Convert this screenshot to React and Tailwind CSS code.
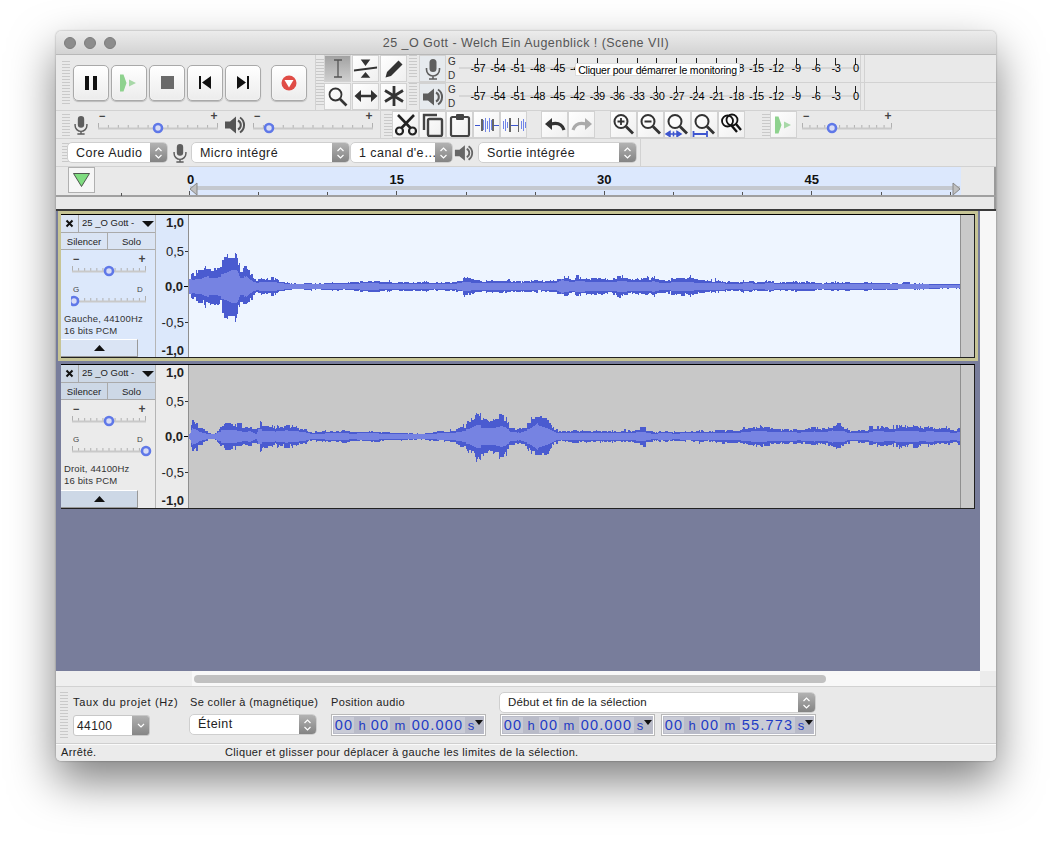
import React from "react";

const sans = "font-['Liberation_Sans',Arial,sans-serif]";

function mulberry(seed) {
  let a = seed;
  return () => {
    a |= 0; a = (a + 0x6d2b79f5) | 0;
    let t = Math.imul(a ^ (a >>> 15), 1 | a);
    t = (t + Math.imul(t ^ (t >>> 7), 61 | t)) ^ t;
    return ((t ^ (t >>> 14)) >>> 0) / 4294967296;
  };
}
const ENV1 = [[189,18],[195,15],[203,16],[210,20],[218,22],[225,24],[232,31],[237,29],[240,14],[243,15],[246,25],[250,14],[255,9],[265,7],[272,9],[280,5],[295,3.5],[310,3.5],[330,4],[350,5.5],[380,5.5],[400,5.5],[420,4.5],[440,5],[460,6],[463,10],[480,8],[500,6.5],[520,5.5],[535,6],[556,7],[561,13],[570,10],[590,9],[600,9],[610,10],[650,10],[670,8],[690,9],[700,8],[750,5],[800,5],[820,4],[860,4.5],[900,3],[935,2.2],[960,1]];
const ENV2 = [[189,3],[192,17],[198,12],[205,6],[210,3],[214,3],[218,9],[222,14],[240,12],[250,10],[256,3],[258,13],[275,12],[295,11],[305,10],[310,5],[340,5.5],[380,5],[400,4],[420,3.5],[430,4.5],[455,6.5],[462,10],[470,15],[476,21],[490,19],[505,20],[510,10],[520,7],[530,15],[537,26],[545,20],[552,12],[558,6],[600,6],[630,6],[640,9],[645,9],[652,5],[700,6],[740,8],[760,11],[780,7],[800,7],[830,12],[850,8],[900,11],[930,10],[960,9]];
function envAt(env, x) {
  for (let i = 1; i < env.length; i++) {
    if (x <= env[i][0]) {
      const [x0, y0] = env[i - 1];
      const [x1, y1] = env[i];
      return y0 + ((y1 - y0) * (x - x0)) / (x1 - x0);
    }
  }
  return 1;
}
function wavePaths(env, seed, cy) {
  const r = mulberry(seed);
  let peak = "", rms = "";
  let up = 1, dn = 1, lump = 1, lumpLeft = 0;
  for (let x = 189; x < 960; x++) {
    if (lumpLeft-- <= 0) {
      lump = 0.72 + 0.33 * r();
      lumpLeft = 5 + Math.floor(r() * 10);
    }
    const base = envAt(env, x);
    const e = (base > 12 ? base * 1.18 : base) * lump;
    if (r() < 0.6) {
      const p = Math.max(1.5, e * (0.72 + 0.3 * r()));
      up = Math.round(p * (r() < 0.08 ? 1.25 : 1));
      dn = Math.round(p * (0.85 + 0.25 * r()));
    }
    const m = Math.max(1, Math.round(e * 0.42 + 0.5));
    const px = x - 189 + 0.5;
    peak += `M${px} ${cy - up}V${cy + dn + 1}`;
    rms += `M${px} ${cy - m}V${cy + m + 1}`;
  }
  return { peak, rms };
}
function Wave({ env, seed, cy, h }) {
  const { peak, rms } = wavePaths(env, seed, cy);
  return (
    <svg width="771" height={h} className="block shrink-0" shapeRendering="crispEdges">
      <path d={peak} stroke="#4a5bd0" strokeWidth="1" fill="none" />
      <path d={rms} stroke="#7683e2" strokeWidth="1" fill="none" />
    </svg>
  );
}

function Grip({ h = "h-[44px]" }) {
  return <div className={`w-[8px] shrink-0 ${h} bg-[repeating-linear-gradient(#c9c9c9_0_1px,transparent_1px_3px)]`} />;
}

function TBtn({ children }) {
  return (
    <div className="w-[36px] h-[36px] shrink-0 rounded-[5px] border border-[#a9a9a9] flex items-center justify-center bg-gradient-to-b from-[#ffffff] to-[#ececec] shadow-[inset_0_0_2px_#fff,0_1px_1px_rgba(0,0,0,.2)]">
      {children}
    </div>
  );
}
function Sq({ children, active, tint }) {
  const bg = active ? "bg-gradient-to-b from-[#a2a2a2] to-[#cfcfcf]" : tint ? "bg-[#e6eaee]" : "bg-gradient-to-br from-[#ffffff] to-[#efefef]";
  return (
    <div className={`w-[27px] h-[27px] shrink-0 flex items-center justify-center border border-[#d2d2d2] ${bg}`}>
      {children}
    </div>
  );
}

const Mic = ({ c = "#5e5e5e", s = 22 }) => (
  <svg width={s} height={s} viewBox="0 0 22 22">
    <rect x="7.5" y="1" width="7" height="13" rx="3.5" fill={c} />
    <path d="M4.5 10v1.5a6.5 6.5 0 0 0 13 0V10M11 18v3M7 21h8" stroke={c} strokeWidth="1.6" fill="none" />
  </svg>
);
const Speaker = ({ c = "#5e5e5e", s = 22 }) => (
  <svg width={s} height={s} viewBox="0 0 22 22">
    <path d="M1 7.5h5L12 2.5v17l-6-5H1z" fill={c} />
    <path d="M14 6.5a5 5 0 0 1 0 9M16 3.5a9 9 0 0 1 0 15" stroke={c} strokeWidth="2" fill="none" />
  </svg>
);
const PlayIcon = () => (
  <svg width="20" height="20" viewBox="0 0 20 20">
    <path d="M1 1.500h3.500L7.500 10l-3 8.500H1z" fill="#8ed28e" />
    <path d="M10 6.500l7 3.500-7 3.500z" fill="#a8d8a8" />
  </svg>
);
const Zoom = ({ mark, under }) => (
  <svg width="25" height="25" viewBox="0 0 25 25">
    <circle cx="10" cy="9.500" r="6.500" stroke="#333" strokeWidth="2" fill="#fff" fillOpacity=".4" />
    <path d="M15 14.500l7 7" stroke="#333" strokeWidth="2.800" />
    {mark === "+" && <path d="M6.500 9.500h7M10 6v7" stroke="#333" strokeWidth="1.800" />}
    {mark === "-" && <path d="M6.500 9.500h7" stroke="#333" strokeWidth="1.800" />}
    {under === "fit" && <path d="M1 22h15M5 19.500l-4 2.500 4 2.500zM12 19.500l4 2.500-4 2.500zM8.500 19.500v5" stroke="#3d55cf" strokeWidth="1.500" fill="#3d55cf" />}
    {under === "proj" && <path d="M1.500 19v6M15 19v6M1.500 22h13.500" stroke="#3d55cf" strokeWidth="1.800" fill="none" />}
  </svg>
);
const ZoomToggle = () => (
  <svg width="25" height="25" viewBox="0 0 25 25">
    <circle cx="8.500" cy="9" r="5.500" stroke="#111" strokeWidth="1.800" fill="none" />
    <circle cx="13" cy="8" r="5.500" stroke="#111" strokeWidth="1.800" fill="none" />
    <path d="M12 13l6 7M17 12l5 6" stroke="#111" strokeWidth="2.400" />
  </svg>
);
const Trim = () => (
  <svg width="24" height="18" viewBox="0 0 24 18" shapeRendering="crispEdges">
    <path d="M0 9h5M19 9h5" stroke="#3d55cf" strokeWidth="1" />
    <path d="M8 4v10M10 2v14M12 5v8M14 2v14M16 4v10" stroke="#6f84e8" strokeWidth="1" />
    <path d="M6 3h1.500v12H6zM17 3h1.500v12H17z" fill="#666" />
  </svg>
);
const Silence = () => (
  <svg width="24" height="18" viewBox="0 0 24 18" shapeRendering="crispEdges">
    <path d="M1 5v8M3 3v12M5 6v6M19 5v8M21 3v12M23 6v6" stroke="#6f84e8" strokeWidth="1" />
    <path d="M7 9h10" stroke="#3d55cf" strokeWidth="1" />
    <path d="M7 2h1.500v14H7zM15.500 2H17v14h-1.500z" fill="#666" />
  </svg>
);

function Slider({ w, at, labels = ["−", "+"] }) {
  const ticks = [];
  for (let i = 0; i <= 12; i++) ticks.push((i / 12) * (w - 3) + 1);
  const pan = labels[0] === "G";
  return (
    <svg width={w + 6} height="26" className="block shrink-0">
      <text x="2" y={pan ? 9.5 : 11} fontSize={pan ? 8 : 11} fontFamily="Liberation Sans" fill="#444" fontWeight={pan ? "normal" : "bold"}>{labels[0]}</text>
      <text x={pan ? w - 10 : w - 8.5} y={pan ? 9.5 : 11} fontSize={pan ? 8 : 12} fontFamily="Liberation Sans" fill="#444" fontWeight={pan ? "normal" : "bold"}>{labels[1]}</text>
      {ticks.map((t, i) => <rect key={i} x={t} y={i === 0 || i === 12 ? 14 : 16} width="1" height={i === 0 || i === 12 ? 5 : 3} fill="#b0b0b0" />)}
      <rect x="1" y="18.500" width={w - 2} height="2" fill="#c9c9c9" />
      <circle cx={at} cy="19" r="4" fill="#d8dcf5" stroke="#5f78e8" strokeWidth="2.600" />
    </svg>
  );
}

function Select({ label, cls, small, tight }) {
  const txt = small
    ? "text-[11.500px] leading-[18px] tracking-[.12px]"
    : tight
      ? "text-[12.500px] leading-[18px] tracking-[.45px]"
      : "text-[12.500px] leading-[20px] tracking-[.45px]";
  return (
    <div className={`${cls} flex items-stretch rounded-[5px] bg-white border border-[#cfcfcf] overflow-hidden shrink-0`}>
      <div className={`flex-1 whitespace-nowrap overflow-hidden text-[#222] pl-[8px] ${txt}`}>{label}</div>
      <div className="w-[17px] bg-gradient-to-b from-[#b2b2b2] to-[#848484] flex items-center justify-center">
        <svg width="9" height="14" viewBox="0 0 9 14"><path d="M1.500 5l3-3 3 3M1.500 9l3 3 3-3" stroke="#fff" strokeWidth="1.200" fill="none" /></svg>
      </div>
    </div>
  );
}

const LEVELS = ["-57","-54","-51","-48","-45","-42","-39","-36","-33","-30","-27","-24","-21","-18","-15","-12","-9","-6","-3","0"];
const HIDDEN = ["-39","-36","-33","-30","-27","-24","-21"];
function MeterRow({ icon, tip, bordered }) {
  return (
    <div className={`flex relative ${bordered ? "h-[28px] border-b border-[#d2d2d2]" : "h-[27px]"}`}>
      <div className="w-px shrink-0" />
      <Grip h="h-[24px]" />
      <div className="w-[2px] shrink-0" />
      <Sq tint>{icon}</Sq>
      <div className="w-[13px] shrink-0 flex flex-col pl-[2px] text-[10px] leading-[14px] text-[#333]"><span>G</span><span>D</span></div>
      <div className="w-[401px] shrink-0 flex pl-[9px] bg-[linear-gradient(transparent_12px,#d6d6d6_12px,#d6d6d6_14px,transparent_14px)]">
        {LEVELS.map((l) => (
          <div key={l} className="w-[19.900px] shrink-0 flex flex-col items-center">
            <div className="w-px h-[7px] mt-[3px] bg-[#222]" />
            {!(tip && HIDDEN.includes(l)) && (
              <span className="-mt-[3px] text-[11px] leading-[12px] text-black tracking-[-.3px] whitespace-nowrap">{l}</span>
            )}
          </div>
        ))}
      </div>
      <div className="w-px h-full bg-[#d2d2d2] shrink-0" />
      <div className="w-[3px] shrink-0" />
      <div className="w-px h-full bg-[#d2d2d2] shrink-0" />
      {tip && (
        <div className="absolute left-[167px] top-[8px] h-[13px] w-[165px] bg-white border border-[#ddd] text-[10.500px] leading-[12px] text-center text-black whitespace-nowrap tracking-[-.2px]">
          Cliquer pour démarrer le monitoring
        </div>
      )}
    </div>
  );
}

function TrackPanel({ info, bg, btn, pan }) {
  return (
    <div className={`w-[95px] shrink-0 ${bg} flex flex-col border-r border-[#b5b5b5]`}>
      <div className="flex h-[18px]">
        <div className={`w-[18px] ${btn} flex items-center justify-center border-r border-b border-[#aaa]`}>
          <svg width="9" height="9" viewBox="0 0 9 9"><path d="M1.500 1.500l6 6M7.500 1.500l-6 6" stroke="#111" strokeWidth="2" /></svg>
        </div>
        <div className={`flex-1 ${btn} flex items-center justify-between pl-[3px] pr-[1px] border-b border-[#aaa] text-[9.500px] text-[#222] whitespace-nowrap`}>
          <span>25 _O Gott -</span>
          <svg width="12" height="6" viewBox="0 0 12 6"><path d="M0 0h12L6 6z" fill="#111" /></svg>
        </div>
      </div>
      <div className="flex h-[17px] border-b border-[#aaa]">
        <div className={`w-[47px] ${btn} border-r border-[#aaa] text-center text-[9.500px] leading-[17px] text-[#222]`}>Silencer</div>
        <div className={`flex-1 ${btn} text-center text-[9.500px] leading-[17px] text-[#222]`}>Solo</div>
      </div>
      <div className="pl-[10px] mt-[2px]"><Slider w={76} at={38} /></div>
      <div className="pl-[10px] mt-[4px]"><Slider w={76} at={pan} labels={["G", "D"]} /></div>
      <div className="pl-[3px] mt-[5px] text-[9.500px] leading-[11.500px] text-[#333] whitespace-nowrap">
        <div className="tracking-[.15px]">{info}</div>
        <div className="tracking-[.15px]">16 bits PCM</div>
      </div>
      <div className="flex-1" />
      <div className={`w-[77px] h-[18px] ${btn} flex items-center justify-center border-t border-white border-r border-r-[#999] border-b border-b-[#999]`}>
        <svg width="11" height="6" viewBox="0 0 11 6"><path d="M0 6h11L5.500 0z" fill="#111" /></svg>
      </div>
    </div>
  );
}

function VRuler({ bg }) {
  const rows = [["1,0", true, "h-[14px]"], ["0,5", false, "h-[29px]"], ["0,0", true, "h-[35px]"], ["-0,5", false, "h-[36px]"], ["-1,0", true, "h-[28px]"]];
  return (
    <div className={`w-[33px] shrink-0 ${bg} border-r border-[#8f8f8f] flex flex-col items-end overflow-hidden`}>
      {rows.map(([t, b, h], i) => (
        <div key={t} className={`${h} shrink-0 flex items-end text-[13px] leading-[13px] text-[#222] ${b ? "font-bold" : ""}`}>
          <span>{t}</span>
          {i > 0 && i < 4 ? <span className={`ml-[1px] mb-[6px] h-px ${i === 2 ? "w-[4px] bg-black" : "w-[3px] bg-[#333]"}`} /> : <span className="w-[4px]" />}
        </div>
      ))}
    </div>
  );
}

function Timecode({ v, w = "w-[155px]" }) {
  const D = ({ t, cls }) => <span className={`bg-[#c9cbd6] tracking-[1.200px] text-[14.500px] text-center ${cls}`}>{t}</span>;
  const U = ({ t, cls }) => <span className={`text-[13px] text-center ${cls}`}>{t}</span>;
  return (
    <div className={`${w} h-[22px] shrink-0 border border-[#b8b8b8] outline outline-1 -outline-offset-2 outline-white bg-[#b9bbc8] flex items-stretch py-[2px] pl-[2px] text-[#1f3cc4] leading-[17px] whitespace-nowrap relative`}>
      <D t="00" cls="w-[20px]" /><U t="h" cls="w-[16px]" /><D t="00" cls="w-[20px]" /><U t="m" cls="w-[20px]" /><D t={v} cls="w-[55px]" /><U t="s" cls="w-[12px]" />
      <svg width="8" height="5" viewBox="0 0 8 5" className="absolute right-[2px] top-[5px]"><path d="M0 0h8L4 5z" fill="#111" /></svg>
    </div>
  );
}

function Label({ children, cls }) {
  return <div className={`text-[11px] leading-[13px] text-[#222] whitespace-nowrap ${cls || ""}`}>{children}</div>;
}

export default function App() {
  return (
    <div className={`w-[1052px] h-[841px] bg-white pl-[56px] pt-[31px] overflow-hidden ${sans}`}>
      <div className="w-[940px] h-[730px] rounded-[5px] overflow-hidden flex flex-col bg-[#e9e9e9] shadow-[0_20px_45px_rgba(0,0,0,.5),0_0_2px_rgba(0,0,0,.4)]">
        {/* title bar */}
        <div className="h-[24px] shrink-0 flex items-center bg-gradient-to-b from-[#ececec] to-[#d3d3d3] border-b border-[#b8b8b8]">
          <div className="flex gap-[8px] pl-[8px]">
            <span className="w-[12px] h-[12px] rounded-full bg-[#8c8c8c] border border-[#7d7d7d]" />
            <span className="w-[12px] h-[12px] rounded-full bg-[#8c8c8c] border border-[#7d7d7d]" />
            <span className="w-[12px] h-[12px] rounded-full bg-[#8c8c8c] border border-[#7d7d7d]" />
          </div>
          <div className="flex-1 text-center pt-[1px] pr-[60px] text-[12.500px] text-[#555] tracking-[.45px] whitespace-nowrap">25 _O Gott - Welch Ein Augenblick ! (Scene VII)</div>
        </div>

        {/* row 1 */}
        <div className="h-[56px] shrink-0 flex border-b border-[#d2d2d2]">
          <div className="w-[260px] shrink-0 flex items-center border-r border-[#d2d2d2] pl-[6px]">
            <Grip />
            <div className="w-[3px]" />
            <div className="flex gap-[2px]">
              <TBtn><svg width="14" height="14" viewBox="0 0 14 14"><path d="M1 0h4v14H1zM9 0h4v14H9z" fill="#111" /></svg></TBtn>
              <TBtn><PlayIcon /></TBtn>
              <TBtn><svg width="13" height="13"><rect width="13" height="13" fill="#6a6a6a" /></svg></TBtn>
              <TBtn><svg width="14" height="13" viewBox="0 0 14 13"><path d="M1 0h2v13H1zM13 0v13L4 6.500z" fill="#111" /></svg></TBtn>
              <TBtn><svg width="14" height="13" viewBox="0 0 14 13"><path d="M11 0h2v13h-2zM1 0v13L10 6.500z" fill="#111" /></svg></TBtn>
              <div className="w-[6px]" />
              <TBtn><svg width="16" height="16" viewBox="0 0 16 16"><circle cx="8" cy="8" r="7.500" fill="#e04c46" /><path d="M3.500 5h9L8 12.500z" fill="#fff" /></svg></TBtn>
            </div>
          </div>
          <div className="w-[8px] shrink-0 pt-[4px]"><Grip h="h-[48px]" /></div>
          <div className="w-[84px] shrink-0 grid grid-cols-3 grid-rows-2">
            <Sq active><svg width="12" height="19" viewBox="0 0 12 19"><path d="M2 1h8M2 18h8M6 1v17" stroke="#555" strokeWidth="1.300" /></svg></Sq>
            <Sq><svg width="26" height="24" viewBox="0 0 26 24"><path d="M1 12.500L25 9.500v2L1 14.500z" fill="#333" /><path d="M8 2h10l-5 7zM8 21h10l-5-6z" fill="#333" /></svg></Sq>
            <Sq><svg width="20" height="20" viewBox="0 0 20 20"><path d="M14.500 1.500l4 4L7 17l-5.500 1.500L3 13z" fill="#333" /></svg></Sq>
            <Sq><svg width="21" height="21" viewBox="0 0 21 21"><circle cx="8.500" cy="8.500" r="6" stroke="#333" strokeWidth="1.800" fill="none" /><path d="M13 13l6.500 6.500" stroke="#333" strokeWidth="2.600" /></svg></Sq>
            <Sq><svg width="24" height="14" viewBox="0 0 24 14"><path d="M5 7h14" stroke="#333" strokeWidth="2.400" /><path d="M7 1L0.500 7 7 13zM17 1l6.500 6L17 13z" fill="#333" /></svg></Sq>
            <Sq><svg width="22" height="22" viewBox="0 0 22 22"><path d="M11 1v20M2 5.500l18 11M20 5.500l-18 11" stroke="#333" strokeWidth="2.800" /></svg></Sq>
          </div>
          <div className="flex-1 flex flex-col">
            <MeterRow icon={<Mic />} tip bordered />
            <MeterRow icon={<Speaker />} />
          </div>
        </div>

        {/* row 2 */}
        <div className="h-[28px] shrink-0 flex items-center border-b border-[#d2d2d2]">
          <div className="w-[6px]" /><Grip h="h-[22px]" />
          <div className="w-px" />
          <Mic s={20} />
          <div className="w-[6px]" />
          <div className="-mt-[5px]"><Slider w={122} at={61} /></div>
          <div className="-ml-px"><Speaker c="#555" s={22} /></div>
          <div className="w-[6px]" />
          <div className="-mt-[5px]"><Slider w={122} at={17} /></div>
          <div className="w-px h-full bg-[#d2d2d2]" /><div className="w-[3px]" /><Grip h="h-[22px]" />
          <div className="flex">
            <Sq><svg width="24" height="24" viewBox="0 0 24 24"><circle cx="5.500" cy="18" r="3.500" stroke="#222" strokeWidth="2.200" fill="none" /><circle cx="18.500" cy="18" r="3.500" stroke="#222" strokeWidth="2.200" fill="none" /><path d="M7.500 15L20 2M16.500 15L4 2" stroke="#222" strokeWidth="2.600" /></svg></Sq>
            <Sq><svg width="24" height="24" viewBox="0 0 24 24"><path d="M3 17V2h13" stroke="#444" strokeWidth="2.400" fill="none" /><rect x="7" y="6" width="14" height="17" rx="1.500" stroke="#444" strokeWidth="2.400" fill="none" /></svg></Sq>
            <Sq><svg width="22" height="24" viewBox="0 0 22 24"><rect x="2" y="4" width="18" height="19" rx="1.500" stroke="#444" strokeWidth="2.200" fill="none" /><rect x="7" y="1" width="8" height="6" rx="1" fill="#444" /></svg></Sq>
            <Sq><Trim /></Sq>
            <Sq><Silence /></Sq>
          </div>
          <div className="w-[14px]" />
          <div className="flex">
            <Sq><svg width="22" height="16" viewBox="0 0 22 16"><path d="M8 1L1 7l7 6z" fill="#333" /><path d="M7 7c6-1.500 11 0 13 6" stroke="#333" strokeWidth="3.200" fill="none" /></svg></Sq>
            <Sq><svg width="22" height="16" viewBox="0 0 22 16"><path d="M14 1l7 6-7 6z" fill="#aaa" /><path d="M15 7C9 5.500 4 7 2 13" stroke="#aaa" strokeWidth="3.200" fill="none" /></svg></Sq>
          </div>
          <div className="w-[15px]" />
          <div className="flex">
            <Sq><Zoom mark="+" /></Sq>
            <Sq><Zoom mark="-" /></Sq>
            <Sq><Zoom under="fit" /></Sq>
            <Sq><Zoom under="proj" /></Sq>
            <Sq><ZoomToggle /></Sq>
          </div>
          <div className="w-[17px]" /><Grip h="h-[22px]" />
          <Sq><PlayIcon /></Sq>
          <div className="w-[4px]" />
          <div className="-mt-[5px]"><Slider w={92} at={31} /></div>
        </div>

        {/* row 3 */}
        <div className="h-[28px] shrink-0 flex items-center border-b border-[#d2d2d2]">
          <div className="w-[6px]" /><Grip h="h-[20px]" />
          <div className="-ml-[3px]"><Select label="Core Audio" cls="w-[101px] h-[21px]" /></div>
          <div className="w-[2px]" />
          <Mic s={20} />
          <div className="w-px" />
          <Select label="Micro intégré" cls="w-[159px] h-[21px]" />
          <Select label="1 canal d'e…" cls="w-[103px] h-[21px]" />
          <div className="w-px" />
          <Speaker c="#666" s={20} />
          <div className="w-[4px]" />
          <Select label="Sortie intégrée" cls="w-[159px] h-[21px]" />
          <div className="w-[3px]" />
          <div className="w-px h-full bg-[#d2d2d2]" />
        </div>

        {/* ruler */}
        <div className="h-[30px] shrink-0 flex border-b-2 border-[#a0a0a0]">
          <div className="w-[133px] shrink-0 flex flex-col">
            <div className="pl-[12px]">
              <div className="w-[27px] h-[26px] bg-[#f6f6f6] border border-[#b0b0b0] flex items-center justify-center">
                <svg width="17" height="14" viewBox="0 0 17 14"><path d="M0.500 0.500h16L8.500 13.500z" fill="#7fdc80" stroke="#333" strokeWidth=".8" /></svg>
              </div>
            </div>
            <div className="flex-1 pl-[65px] flex items-end"><span className="w-px h-[3px] bg-[#555]" /></div>
          </div>
          <div className="w-[772px] shrink-0 bg-[#dce8fd] flex flex-col relative">
            <div className="h-[19px] flex pl-[1px]">
              {["0", "15", "30", "45"].map((t, i) => (
                <div key={t} className={`w-[207.500px] shrink-0 font-bold text-[13px] leading-[26px] text-[#111] ${i === 0 ? "-translate-x-[3px]" : "-translate-x-[8px]"}`}>{t}</div>
              ))}
            </div>
            <div className="h-[4px] mx-[1px] bg-[#c4c8cf]" />
            <div className="flex-1 flex items-end">
              {Array.from({ length: 12 }).map((_, i) => (
                <div key={i} className="w-[69.170px] shrink-0 flex items-end">
                  <span className={`w-px bg-[#555] ${i % 3 === 0 ? "h-[4px]" : "h-[3px]"}`} />
                </div>
              ))}
            </div>
            <svg width="9" height="14" viewBox="0 0 9 14" className="absolute left-0 top-[15px]"><path d="M8 1L1 7l7 6z" fill="#bfbfbf" stroke="#888" /></svg>
            <svg width="9" height="14" viewBox="0 0 9 14" className="absolute right-0 top-[15px]"><path d="M1 1l7 6-7 6z" fill="#bfbfbf" stroke="#888" /></svg>
          </div>
          <div className="flex-1 border-r-2 border-[#9a9a9a]" />
        </div>
        <div className="h-[12px] shrink-0 bg-[#e9e9e9] border-r-2 border-[#9a9a9a]" />

        {/* tracks */}
        <div className="h-[462px] shrink-0 flex bg-[#787d9b] border-t-2 border-[#3a3a3a]">
          <div className="w-[924px] shrink-0 flex flex-col">
            <div className="h-[150px] shrink-0 ml-[2px] mr-[2px] border-[3px] border-[#c6c495] flex">
              <div className="flex-1 flex border border-l-0 border-[#222] border-t-black">
                <TrackPanel info="Gauche, 44100Hz" bg="bg-[#dce8fb]" btn="bg-[#dae4f4]" pan={3} />
                <VRuler bg="bg-[#dce8fb]" />
                <div className="bg-[#eef5ff] flex"><Wave env={ENV1} seed={7} cy={71} h={143} /></div>
                <div className="flex-1 bg-[#c9c9c9] border-l border-[#8f8f8f]" />
              </div>
            </div>
            <div className="h-[150px] shrink-0 ml-[5px] mr-[2px] pt-[3px] pr-[3px] pb-[2px] flex">
              <div className="flex-1 flex border border-l-0 border-[#222] border-t-black">
                <TrackPanel info="Droit, 44100Hz" bg="bg-[#ebebeb]" btn="bg-[#cdd8e6]" pan={75} />
                <VRuler bg="bg-[#ebebeb]" />
                <div className="bg-[#c8c8c8] flex"><Wave env={ENV2} seed={21} cy={71} h={143} /></div>
                <div className="flex-1 bg-[#c9c9c9] border-l border-[#8f8f8f]" />
              </div>
            </div>
            <div className="flex-1" />
          </div>
          <div className="flex-1 bg-[#f7f7f7]" />
        </div>

        {/* hscroll */}
        <div className="h-[16px] shrink-0 flex items-center bg-[#ececec] border-b border-[#d2d2d2]">
          <div className="w-[136px] h-full bg-[#efefef]" />
          <div className="w-[788px] h-full bg-[#f8f8f8] flex items-center pl-[2px]">
            <div className="w-[632px] h-[8px] rounded-full bg-[#c1c1c1]" />
          </div>
        </div>

        {/* bottom toolbar */}
        <div className="h-[57px] shrink-0 flex border-b border-[#cfcfcf]">
          <div className="w-[4px]" /><div className="pt-[5px]"><Grip h="h-[46px]" /></div>
          <div className="w-[5px]" />
          <div className="w-[115px] shrink-0 flex flex-col">
            <Label cls="pt-[9px] tracking-[.65px]">Taux du projet (Hz)</Label>
            <div className="mt-[6px] w-[77px] h-[21px] bg-white border border-[#c8c8c8] rounded-[3px] flex overflow-hidden">
              <div className="flex-1 pl-[3px] text-[12px] leading-[21px] tracking-[.4px] text-[#222]">44100</div>
              <div className="w-[17px] bg-gradient-to-b from-[#b0b0b0] to-[#868686] flex items-center justify-center">
                <svg width="8" height="5" viewBox="0 0 8 5"><path d="M1 1l3 3 3-3" stroke="#fff" strokeWidth="1.200" fill="none" /></svg>
              </div>
            </div>
          </div>
          <div className="w-[2px]" />
          <div className="w-[141px] shrink-0 flex flex-col">
            <Label cls="pt-[9px] tracking-[.35px]">Se coller à (magnétique)</Label>
            <div className="mt-[5px] -ml-px"><Select tight label="Éteint" cls="w-[128px] h-[21px]" /></div>
          </div>
          <div className="w-[168px] shrink-0 flex flex-col">
            <Label cls="pt-[9px] tracking-[.35px]">Position audio</Label>
            <div className="mt-[5px]"><Timecode v="00.000" /></div>
          </div>
          <div className="flex flex-col">
            <div className="mt-[5px]"><Select small label="Début et fin de la sélection" cls="w-[317px] h-[21px]" /></div>
            <div className="flex gap-[6px] mt-px ml-px">
              <Timecode v="00.000" />
              <Timecode v="55.773" />
            </div>
          </div>
        </div>

        {/* status */}
        <div className="flex-1 flex text-[11px] leading-[14px] text-[#222] tracking-[.36px] bg-[#ebebeb] border-t border-[#fafafa]">
          <div className="w-[169px] pl-[5px] shrink-0">Arrêté.</div>
          <div className="whitespace-nowrap">Cliquer et glisser pour déplacer à gauche les limites de la sélection.</div>
        </div>
      </div>
    </div>
  );
}
